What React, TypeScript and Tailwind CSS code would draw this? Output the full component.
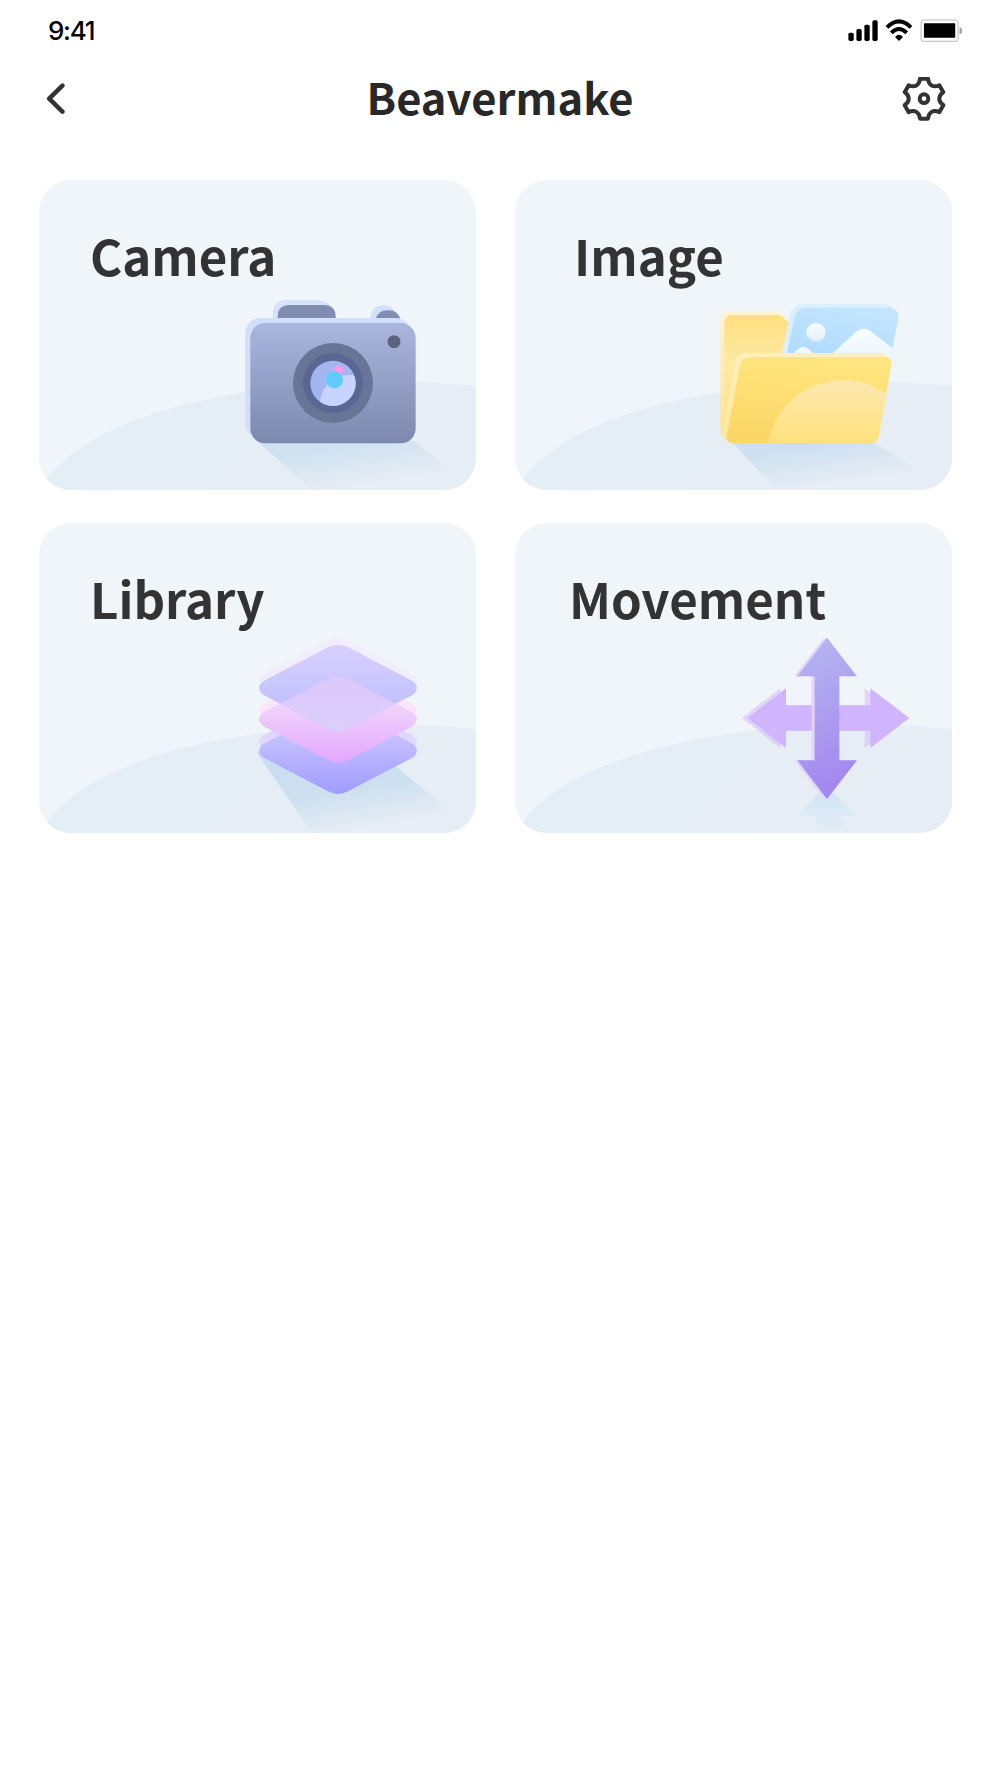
import type { ReactNode } from 'react';

const TITLE_FONT = "font-['Noto_Sans_CJK_SC','Noto_Sans',sans-serif]";

const GEAR_PATH =
  'M-12-60H12C14-40 27.6-32.1 46-40.4L58-19.6C41.6-7.9 41.6 7.9 58 19.6L46 40.4C27.6 32.1 14 40 12 60H-12C-14 40-27.6 32.1-46 40.4L-58 19.6C-41.6 7.9-41.6-7.9-58-19.6L-46-40.4C-27.6-32.1-14-40-12-60Z';

const DIAMOND_PATH =
  'M-30-122Q0-138 30-122L218-24C243-10 243 10 218 24L30 122Q0 138-30 122L-218 24C-243 10-243-10-218-24Z';

const FOLDER_FRONT =
  'M733 561H1138Q1163 561 1159 584L1121 797Q1117 820 1092 820H686Q661 820 666 795L706 583Q710 561 733 561Z';

const PHOTO_SHEET =
  'M906 413H1148Q1186 413 1179 450L1150 600H836L868 444Q874 413 906 413Z';

const ARROW_VERTICAL =
  'M966 367L1056 483H1003V735H1056L966 851L877 735H929V483H877Z';

const ARROW_HORIZONTAL =
  'M727 608L843 519V570H1096V519L1213 608L1096 698V646H843V698Z';

function StatusIcons() {
  return (
    <svg viewBox="84 58 346 70" className="w-[115.3px] h-[23.3px]">
      <rect x="85" y="99" width="16" height="25" rx="5" />
      <rect x="109" y="88" width="16" height="36" rx="5" />
      <rect x="133" y="75" width="16" height="49" rx="5" />
      <rect x="157" y="62" width="16" height="62" rx="5" />
      <g fill="none" stroke="#000" strokeWidth="12">
        <path d="M201 83Q237 47 273 83" />
        <path d="M214 100Q237 76 260 100" />
      </g>
      <path d="M225 112Q237 98 249 112L237 124Z" />
      <rect x="303.5" y="61" width="111" height="64" rx="6" fill="#fff" stroke="#b9b9b9" strokeWidth="3" />
      <rect x="312" y="71" width="94" height="43" rx="2" />
      <path d="M419 82Q427 84 427 93T419 104Z" fill="#a6a6a6" />
    </svg>
  );
}

function Hill({ id }: { id: string }) {
  return (
    <>
      <defs>
        <linearGradient id={id} x1="0" y1="0" x2="1" y2="0.25">
          <stop offset="0" stopColor="#e2eef8" />
          <stop offset="0.5" stopColor="#e5edf5" />
          <stop offset="1" stopColor="#e7edf4" />
        </linearGradient>
      </defs>
      <path
        d="M-2 935C112 728 518 605 1068 605C1158 605 1240 611 1311 618V935Z"
        fill={`url(#${id})`}
      />
    </>
  );
}

function CameraArt() {
  return (
    <g transform="translate(-27 -30)">
      <defs>
        <linearGradient id="cam-body" x1="0" y1="0" x2="0" y2="1">
          <stop offset="0" stopColor="#abb6de" />
          <stop offset="1" stopColor="#7c88ae" />
        </linearGradient>
        <linearGradient id="cam-shadow" gradientUnits="userSpaceOnUse" x1="900" y1="830" x2="918" y2="955">
          <stop offset="0" stopColor="#cee1f0" />
          <stop offset="1" stopColor="#cee1f0" stopOpacity="0" />
        </linearGradient>
        <clipPath id="cam-lens">
          <circle cx="909" cy="640" r="68" />
        </clipPath>
      </defs>
      <path d="M680 812L850 962H1337L1150 812Z" fill="url(#cam-shadow)" />
      <path d="M728 450V432Q728 390 770 390H862Q892 390 905 415V450Z" fill="#d8e2fe" />
      <path d="M1021 450Q1021 406 1060 406Q1082 406 1096 425V450Z" fill="#d3dffd" />
      <path d="M743 450V441Q743 405 779 405H881Q917 405 917 441V450Z" fill="#808db0" />
      <path d="M1037 450Q1042 421 1074 421Q1106 421 1111 450Z" fill="#808db0" />
      <rect x="646" y="444" width="496" height="361" rx="45" fill="#d3ddfd" />
      <rect x="661" y="459" width="496" height="361" rx="45" fill="url(#cam-body)" />
      <circle cx="1092" cy="515" r="19.5" fill="#5d627e" />
      <circle cx="909" cy="639" r="120" fill="#697596" />
      <circle cx="909" cy="639" r="90" fill="#5b6793" />
      <circle cx="909" cy="640" r="68" fill="#a4b6f0" />
      <circle cx="957" cy="702" r="87" fill="#c8d4ff" clipPath="url(#cam-lens)" />
      <circle cx="925" cy="602" r="15" fill="#ff9ae6" />
      <circle cx="913" cy="629" r="26" fill="#60ccfc" />
    </g>
  );
}

function FolderArt() {
  return (
    <g transform="translate(-30 -30)">
      <defs>
        <linearGradient id="fold-back" x1="0" y1="0" x2="0" y2="1">
          <stop offset="0" stopColor="#ffdf7e" />
          <stop offset="0.4" stopColor="#fee9a6" />
          <stop offset="0.7" stopColor="#ffe392" />
          <stop offset="1" stopColor="#ffe08a" />
        </linearGradient>
        <linearGradient id="fold-edge" x1="0" y1="0" x2="0" y2="1">
          <stop offset="0" stopColor="#fff3d2" />
          <stop offset="0.5" stopColor="#ffeab2" />
          <stop offset="1" stopColor="#ffe28c" />
        </linearGradient>
        <linearGradient id="fold-lip" x1="0" y1="0" x2="0" y2="1">
          <stop offset="0" stopColor="#fff0be" />
          <stop offset="1" stopColor="#ffe79f" />
        </linearGradient>
        <linearGradient id="fold-front" x1="0.6" y1="0" x2="0.4" y2="1">
          <stop offset="0" stopColor="#ffe680" />
          <stop offset="1" stopColor="#fad664" />
        </linearGradient>
        <linearGradient id="fold-disc" gradientUnits="userSpaceOnUse" x1="0" y1="631" x2="0" y2="820">
          <stop offset="0" stopColor="#fce8b0" />
          <stop offset="1" stopColor="#ffe17c" />
        </linearGradient>
        <linearGradient id="photo" gradientUnits="userSpaceOnUse" x1="1040" y1="413" x2="1010" y2="560">
          <stop offset="0" stopColor="#c3e5ff" />
          <stop offset="1" stopColor="#b2dcff" />
        </linearGradient>
        <linearGradient id="photo-white" x1="0" y1="0" x2="0" y2="1">
          <stop offset="0" stopColor="#fafdff" />
          <stop offset="1" stopColor="#e1f1fe" />
        </linearGradient>
        <linearGradient id="fold-shadow" gradientUnits="userSpaceOnUse" x1="890" y1="830" x2="908" y2="955">
          <stop offset="0" stopColor="#cde0f0" />
          <stop offset="1" stopColor="#cde0f0" stopOpacity="0" />
        </linearGradient>
        <clipPath id="fold-clip">
          <path d={FOLDER_FRONT} />
        </clipPath>
        <clipPath id="photo-clip">
          <path d={PHOTO_SHEET} />
        </clipPath>
      </defs>
      <path d="M680 815L805 950L1250 905L1100 815Z" fill="url(#fold-shadow)" />
      <path d="M676 424H806Q822 424 832 434L850 458L800 820H690Q646 812 646 770V454Q646 424 676 424Z" fill="url(#fold-edge)" />
      <path d="M684 435H816Q826 435 832 441L851 458L800 815H690Q658 810 658 780V461Q658 435 684 435Z" fill="url(#fold-back)" />
      <path d={PHOTO_SHEET} transform="translate(-13 -11)" fill="#dceffe" />
      <path d={PHOTO_SHEET} fill="url(#photo)" />
      <g clipPath="url(#photo-clip)" fill="url(#photo-white)">
        <ellipse cx="933" cy="486.5" rx="29" ry="27.5" />
        <path d="M970 562L1050 488Q1075 466 1100 486L1190 555V610H970Z" />
        <path d="M850 562L880 537Q895 525 910 537L940 560Z" />
      </g>
      <path d={FOLDER_FRONT} transform="translate(-13 -12)" fill="url(#fold-lip)" />
      <path d={FOLDER_FRONT} fill="url(#fold-front)" />
      <circle cx="1015" cy="862" r="231" fill="url(#fold-disc)" clipPath="url(#fold-clip)" />
    </g>
  );
}

function LayersArt() {
  return (
    <g transform="translate(-27 -23)">
      <defs>
        <linearGradient id="layer-top" x1="0" y1="0" x2="0" y2="1">
          <stop offset="0" stopColor="#d9d0fe" />
          <stop offset="0.7" stopColor="#c1c0ff" />
          <stop offset="1" stopColor="#bfc0ff" />
        </linearGradient>
        <linearGradient id="layer-mid" x1="0" y1="0" x2="0" y2="1">
          <stop offset="0.2" stopColor="#f3dcfb" />
          <stop offset="1" stopColor="#e2a8fe" />
        </linearGradient>
        <linearGradient id="layer-low" x1="0" y1="0" x2="0" y2="1">
          <stop offset="0.2" stopColor="#cdc8fe" />
          <stop offset="1" stopColor="#a09cff" />
        </linearGradient>
        <linearGradient id="layer-mix" x1="0" y1="0" x2="0" y2="1">
          <stop offset="0" stopColor="#dec7fc" />
          <stop offset="0.62" stopColor="#dacffb" />
        </linearGradient>
        <linearGradient id="layer-shadow" gradientUnits="userSpaceOnUse" x1="890" y1="760" x2="920" y2="950">
          <stop offset="0" stopColor="#c9dff0" />
          <stop offset="0.4" stopColor="#cde0ef" />
          <stop offset="1" stopColor="#cde0ef" stopOpacity="0" />
        </linearGradient>
        <clipPath id="layer-clip">
          <path d={DIAMOND_PATH} transform="translate(924 518)" />
        </clipPath>
      </defs>
      <path d="M680 712L852 962H1350L1100 755L924 690Z" fill="url(#layer-shadow)" />
      <path d={DIAMOND_PATH} transform="translate(924 681)" fill="#e0d8fc" />
      <path d={DIAMOND_PATH} transform="translate(924 706)" fill="url(#layer-low)" />
      <path d={DIAMOND_PATH} transform="translate(924 588)" fill="#fce4fb" />
      <path d={DIAMOND_PATH} transform="translate(924 612)" fill="url(#layer-mid)" />
      <path d={DIAMOND_PATH} transform="translate(924 497)" fill="#f2edfc" />
      <path d={DIAMOND_PATH} transform="translate(924 518)" fill="url(#layer-top)" />
      <g clipPath="url(#layer-clip)">
        <path d={DIAMOND_PATH} transform="translate(924 612)" fill="url(#layer-mix)" />
      </g>
    </g>
  );
}

function ArrowsArt() {
  return (
    <g transform="translate(-30 -23)">
      <defs>
        <linearGradient id="arrow" x1="0" y1="0" x2="0.2" y2="1">
          <stop offset="0" stopColor="#b8b8f0" />
          <stop offset="1" stopColor="#a388ef" />
        </linearGradient>
        <linearGradient id="arrow-shadow" x1="0" y1="0" x2="0" y2="1">
          <stop offset="0" stopColor="#cfe4f4" />
          <stop offset="1" stopColor="#dcebf7" stopOpacity="0.6" />
        </linearGradient>
      </defs>
      <path d="M950 820H970L1058 901H1003L1028 945H950L922 901H883Z" fill="url(#arrow-shadow)" />
      <path d={ARROW_HORIZONTAL} transform="translate(-17 0)" fill="#d0b5fe" fillOpacity="0.5" />
      <path d={ARROW_HORIZONTAL} fill="#d0b5fe" />
      <path d={ARROW_VERTICAL} transform="translate(-9 0)" fill="#e4d3fd" />
      <path d={ARROW_VERTICAL} fill="url(#arrow)" />
    </g>
  );
}

type Tile = {
  title: string;
  offset: string;
  art: ReactNode;
};

const tiles: Tile[] = [
  { title: 'Camera', offset: 'pl-[51px]', art: <CameraArt /> },
  { title: 'Image', offset: 'pl-[59px]', art: <FolderArt /> },
  { title: 'Library', offset: 'pl-[51px]', art: <LayersArt /> },
  { title: 'Movement', offset: 'pl-[54px]', art: <ArrowsArt /> },
];

export default function App() {
  return (
    <div className="w-[1000px] h-[1778px] bg-white overflow-hidden">
      <div className="flex items-center justify-between h-[62px] pl-[48px] pr-[36.7px]">
        <span className="font-['Inter',sans-serif] font-medium text-[26px] leading-none tracking-[-1.3px] text-black">
          9:41
        </span>
        <StatusIcons />
      </div>

      <header className="grid grid-cols-[1fr_auto_1fr] items-center h-[73px] px-[46px]">
        <button aria-label="Back" className="justify-self-start">
          <svg viewBox="0 0 20 32" className="block w-[20px] h-[32px]">
            <path d="M16.4 2.7L3.2 15.7L16.4 28.7" fill="none" stroke="#333" strokeWidth="4.5" strokeLinecap="round" strokeLinejoin="round" />
          </svg>
        </button>
        <h1 className={`${TITLE_FONT} -mt-[3px] font-bold text-[43.5px] leading-[64px] text-[#282828]`}>
          Beavermake
        </h1>
        <button aria-label="Settings" className="justify-self-end mr-2">
          <svg viewBox="-66 -65 132 132" className="block w-[44px] h-[44px]" fill="none" stroke="#333">
            <path d={GEAR_PATH} strokeWidth="12" strokeLinejoin="round" />
            <circle r="13" strokeWidth="12" />
          </svg>
        </button>
      </header>

      <main className="grid grid-cols-[437px_437px] gap-x-[39px] gap-y-[32.3px] pl-[39px] pt-[45.3px]">
        {tiles.map((tile, i) => (
          <section
            key={tile.title}
            className="relative h-[310px] rounded-[32px] overflow-hidden bg-[#f0f5f9]"
          >
            <svg viewBox="0 0 1311 930" className="absolute inset-0 w-full h-full">
              <Hill id={`hill-${i}`} />
              {tile.art}
            </svg>
            <h2 className={`relative pt-[39px] ${tile.offset} ${TITLE_FONT} font-bold text-[49.2px] leading-[72px] text-[#333]`}>
              {tile.title}
            </h2>
          </section>
        ))}
      </main>
    </div>
  );
}
